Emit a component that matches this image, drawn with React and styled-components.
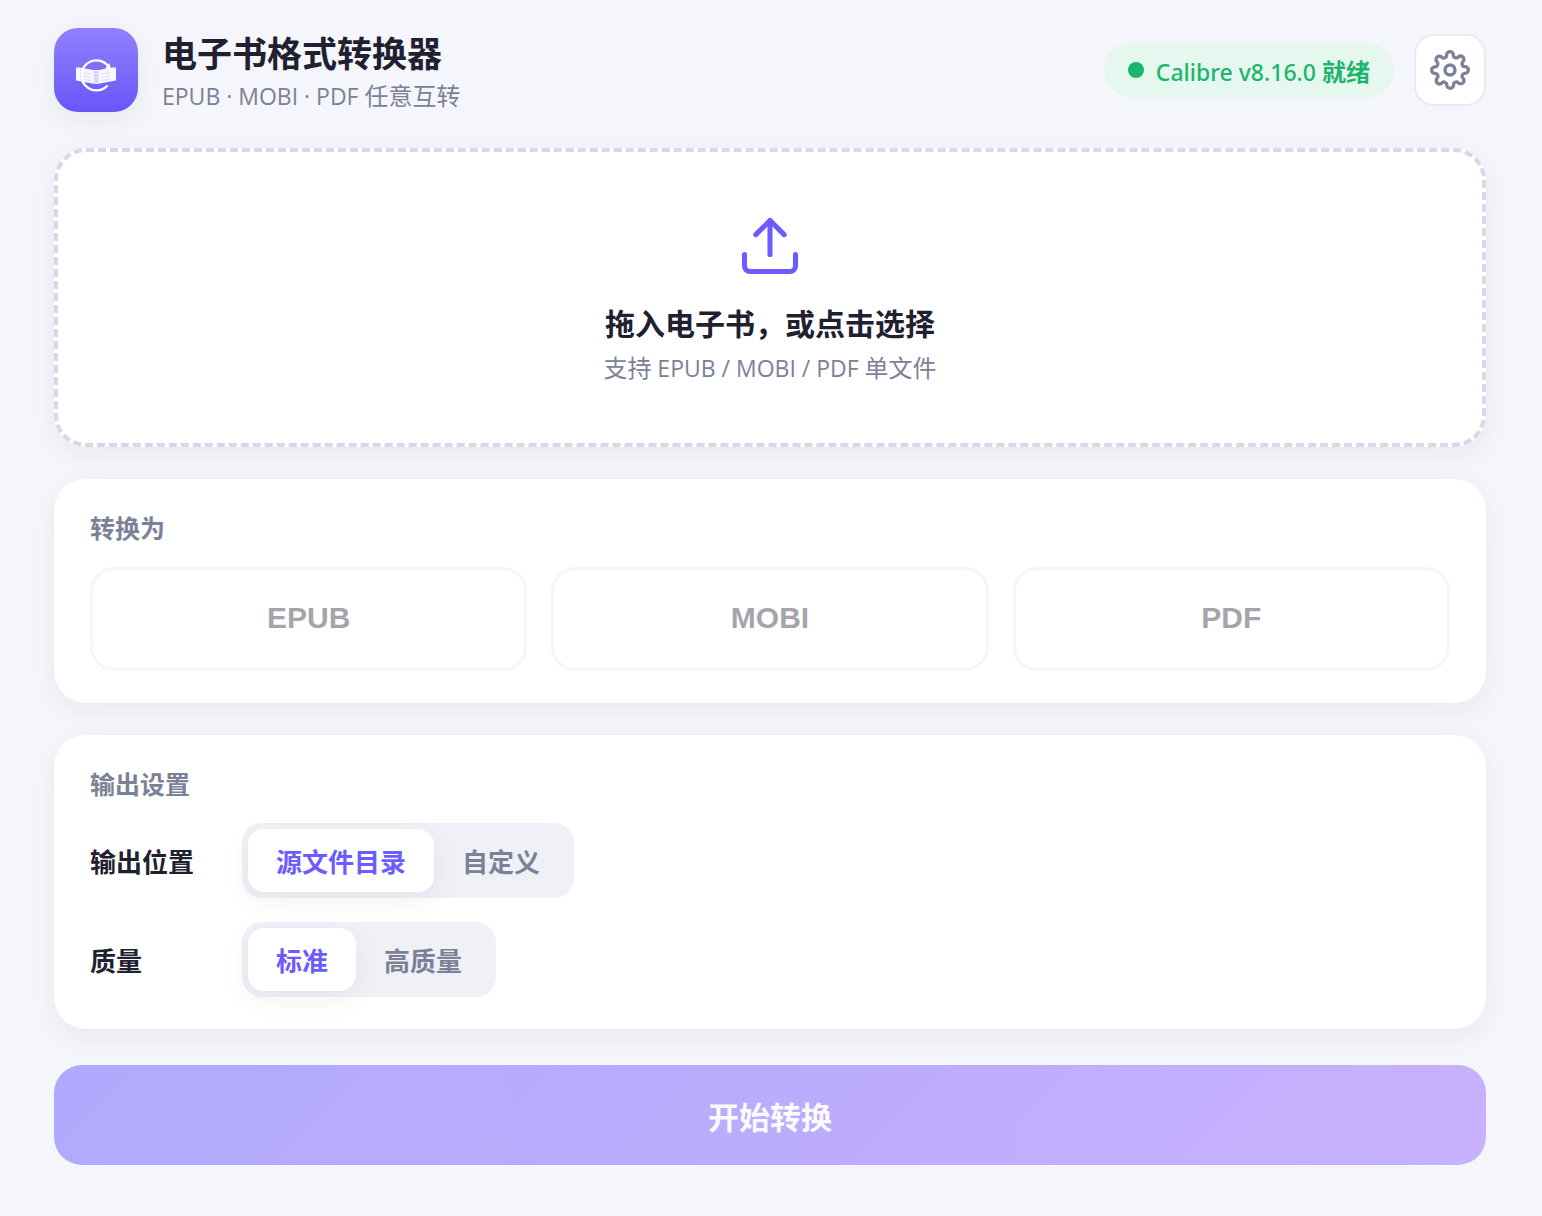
import React, { useState } from 'react';
import styled, { createGlobalStyle, css } from 'styled-components';
import { FiSettings, FiUpload } from 'react-icons/fi';

const FORMATS = ['EPUB', 'MOBI', 'PDF'];
const LOCATIONS = ['源文件目录', '自定义'];
const QUALITIES = ['标准', '高质量'];

const Logo = () => (
  <LogoTile>
    <svg viewBox="0 0 84 84" width="84" height="84" aria-hidden="true">
      <path
        d="M22 39.5L26 39.5L39 42H45L58 39.5L62 39.5V52.5L43 56H41L22 52.5Z"
        fill="#f8f6ff"
      />
      <path d="M40 42.5L42 43L44.5 42.5V55.5L42 56L40 55.5Z" fill="#dcd5fb" />
      <path
        d="M29 44.5L37 46M29 48L37 49.5M29 51.5L37 52.5M56 44.5L47 46M56 48L47 49.5M56 51.5L47 52.5"
        stroke="#e2dcfc"
        strokeWidth="1"
        fill="none"
      />
      <path
        d="M53.5 57.5A15 15 0 1 1 54.5 38.5"
        stroke="#fff"
        strokeWidth="2.4"
        fill="none"
      />
      <path d="M51 40.5L55.5 35L57 41.5Z" fill="#fff" />
      <path d="M26.5 40V53" stroke="#dcd5fb" strokeWidth="0.6" />
    </svg>
  </LogoTile>
);

const Segmented = ({ id, label, options }) => {
  const [value, setValue] = useState(options[0]);

  return (
    <SettingRow>
      <SettingLabel id={id}>{label}</SettingLabel>
      <SegmentGroup role="group" aria-labelledby={id}>
        {options.map((option) => (
          <Segment
            key={option}
            type="button"
            $active={option === value}
            aria-pressed={option === value}
            onClick={() => setValue(option)}
          >
            {option}
          </Segment>
        ))}
      </SegmentGroup>
    </SettingRow>
  );
};

const App = () => (
  <>
    <GlobalStyle />
    <Page>
      <Header>
        <Logo />
        <Brand>
          <Title>电子书格式转换器</Title>
          <Subtitle>
            <Latin>EPUB · MOBI · PDF </Latin>任意互转
          </Subtitle>
        </Brand>
        <Status>
          <Dot />
          <span>
            <Latin>Calibre v8.16.0 </Latin>
            <b>就绪</b>
          </span>
        </Status>
        <SettingsButton type="button" aria-label="设置">
          <FiSettings size={40} />
        </SettingsButton>
      </Header>

      <DropZone>
        <input type="file" accept=".epub,.mobi,.pdf" hidden />
        <FiUpload size={68} />
        <DropTitle>拖入电子书，或点击选择</DropTitle>
        <DropHint>
          支持<Latin> EPUB / MOBI / PDF </Latin>单文件
        </DropHint>
      </DropZone>

      <Card>
        <CardTitle>转换为</CardTitle>
        <FormatGrid>
          {FORMATS.map((format) => (
            <FormatButton key={format} type="button" disabled>
              {format}
            </FormatButton>
          ))}
        </FormatGrid>
      </Card>

      <Card>
        <CardTitle>输出设置</CardTitle>
        <Settings>
          <Segmented id="location" label="输出位置" options={LOCATIONS} />
          <Segmented id="quality" label="质量" options={QUALITIES} />
        </Settings>
      </Card>

      <ConvertButton type="button" disabled>
        开始转换
      </ConvertButton>
    </Page>
  </>
);

const GlobalStyle = createGlobalStyle`
  * {
    box-sizing: border-box;
  }

  body {
    margin: 0;
    background: #f5f6fb;
    color: #1f2130;
    font-family: 'Open Sans', 'Noto Sans CJK SC', sans-serif;
  }

  button {
    font-family: inherit;
    cursor: pointer;
  }

  button:disabled {
    cursor: not-allowed;
  }
`;

const cardShadow = css`
  box-shadow: 0 8px 28px rgba(30, 30, 70, 0.06);
`;

const Page = styled.main`
  display: flex;
  flex-direction: column;
  gap: 32px;
  padding: 28px 56px 48px 54px;
`;

const Header = styled.header`
  display: flex;
  align-items: center;
  margin-bottom: 4px;
`;

const LogoTile = styled.div`
  width: 84px;
  height: 84px;
  border-radius: 24px;
  background: linear-gradient(180deg, #9180ff, #6955f8);
  ${cardShadow}

  svg {
    display: block;
  }
`;

const Brand = styled.div`
  flex: 1;
  margin-left: 24px;
`;

const Title = styled.h1`
  margin: 0;
  font-size: 35px;
  line-height: 52px;
  font-weight: 700;
`;

const Subtitle = styled.p`
  margin: 0;
  font-size: 24px;
  line-height: 32px;
  color: #7c8197;
`;

const Latin = styled.span`
  font-size: 23px;
  line-height: 1;
  white-space: pre;
`;

const Status = styled.div`
  display: flex;
  align-items: center;
  gap: 12px;
  height: 56px;
  padding: 0 24px;
  border-radius: 28px;
  background: #e6f7ef;
  color: #1bb56b;
  font-family: 'Noto Sans', 'Noto Sans CJK SC', sans-serif;
  font-size: 24px;
  font-weight: 500;
`;

const Dot = styled.i`
  width: 16px;
  height: 16px;
  border-radius: 50%;
  background: #1bb56b;
`;

const SettingsButton = styled.button`
  display: flex;
  align-items: center;
  justify-content: center;
  width: 72px;
  height: 72px;
  margin-left: 20px;
  padding: 0;
  border: 2px solid #e9eaf3;
  border-radius: 20px;
  background: #fff;
  color: #7c8197;
`;

const DropZone = styled.label`
  display: flex;
  flex-direction: column;
  align-items: center;
  padding: 60px;
  border: 4px dashed #d8d8e8;
  border-radius: 32px;
  background: #fff;
  cursor: pointer;
  ${cardShadow}

  svg {
    color: #6c5cff;
    stroke-width: 1.8;
  }
`;

const DropTitle = styled.strong`
  margin-top: 24px;
  font-size: 30px;
  line-height: 40px;
  font-weight: 700;
`;

const DropHint = styled.span`
  margin-top: 8px;
  font-size: 24px;
  line-height: 31px;
  color: #7c8197;
`;

const Card = styled.section`
  padding: 32px 36px;
  border-radius: 32px;
  background: #fff;
  ${cardShadow}
`;

const CardTitle = styled.h2`
  margin: 0 0 22px;
  font-size: 25px;
  line-height: 34px;
  font-weight: 700;
  color: #7c8197;
`;

const FormatGrid = styled.div`
  display: grid;
  grid-template-columns: repeat(3, 1fr);
  gap: 24px;
`;

const FormatButton = styled.button`
  height: 104px;
  padding: 0 0 2px;
  border: 3px solid #e9eaf3;
  border-radius: 24px;
  background: #fff;
  color: #1f2130;
  font-family: 'Liberation Sans', sans-serif;
  font-size: 30px;
  font-weight: 700;

  &:disabled {
    opacity: 0.4;
  }
`;

const Settings = styled.div`
  display: flex;
  flex-direction: column;
  gap: 24px;
`;

const SettingRow = styled.div`
  display: flex;
  align-items: center;
`;

const SettingLabel = styled.span`
  width: 152px;
  font-size: 26px;
  font-weight: 700;
`;

const SegmentGroup = styled.div`
  display: flex;
  padding: 6px;
  border-radius: 20px;
  background: #f0f1f7;
`;

const Segment = styled.button`
  padding: 16px 28px 12px;
  border: 0;
  border-radius: 16px;
  background: transparent;
  color: #7c8197;
  font-size: 26px;
  line-height: 35px;
  font-weight: 700;

  ${({ $active }) =>
    $active &&
    css`
      background: #fff;
      color: #6c5cff;
      ${cardShadow}
    `}
`;

const ConvertButton = styled.button`
  height: 100px;
  margin-top: 4px;
  border: 0;
  border-radius: 28px;
  background: linear-gradient(135deg, #6c5cff, #9b6cff);
  color: #fff;
  font-size: 31px;
  font-weight: 700;

  &:disabled {
    opacity: 0.5;
  }
`;

export default App;
